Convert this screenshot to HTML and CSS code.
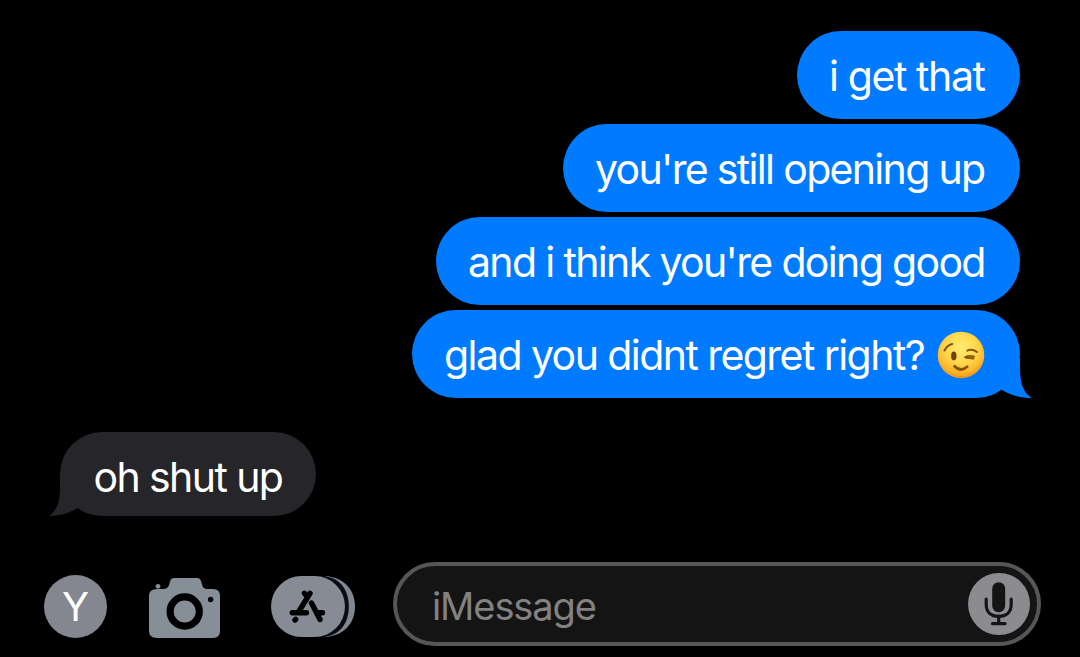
FILE: index.html
```html
<!DOCTYPE html>
<html lang="en">
<head>
<meta charset="utf-8">
<title>Messages</title>
<link rel="stylesheet" href="styles.css">
</head>
<body>
<main class="thread">
  <div class="bubble sent get"><span>i get that</span></div>
  <div class="bubble sent opening"><span>you're still opening up</span></div>
  <div class="bubble sent doing"><span>and i think you're doing good</span></div>
  <div class="bubble sent glad">
    <span>glad you didnt regret right?</span>
    <svg class="emoji" width="48" height="48" viewBox="0 0 48 48" role="img" aria-label="winking face">
      <defs>
        <radialGradient id="face" cx=".5" cy=".34" r=".66">
          <stop offset="0" stop-color="#ffec72"/>
          <stop offset=".5" stop-color="#ffd84b"/>
          <stop offset=".82" stop-color="#fdb52a"/>
          <stop offset="1" stop-color="#ed9219"/>
        </radialGradient>
      </defs>
      <circle cx="24" cy="24" r="23.3" fill="url(#face)"/>
      <ellipse cx="16.8" cy="25" rx="2.7" ry="4.4" fill="#70420a"/>
      <g fill="none" stroke="#87520c" stroke-width="2.1" stroke-linecap="round">
        <path d="M7.5 19.5Q10 14.2 15.2 13"/>
        <path d="M30.3 19.6Q35 17.5 40 21"/>
        <path d="M28 26.2Q32 23.9 37 25.6M28.5 26.6L36.5 27.5" stroke-width="1.8"/>
        <path d="M17.5 35.2Q24 41.7 30.2 35.6" stroke-width="2.7"/>
      </g>
    </svg>
    <svg class="tail" width="44" height="40" viewBox="0 0 44 40" aria-hidden="true"><path d="M32 0V10C32 25 35 34 43.5 40C33 40 22 37 14 32L0 20V0Z" fill="#007aff"/></svg>
  </div>
  <div class="bubble received">
    <span>oh shut up</span>
    <svg class="tail" width="44" height="40" viewBox="0 0 44 40" aria-hidden="true"><path d="M11 0V10C11 25 9 33 0 40C10 40 21 37 29 32L44 20V0Z" fill="#26252a"/></svg>
  </div>
</main>
<footer class="composer">
  <div class="avatar"><span>Y</span></div>
  <svg class="camera" width="72" height="62" viewBox="0 0 72 62" aria-label="Camera">
    <path d="M8 12H14Q19 12 20 8L21.5 3Q22.5 1 25 1H48Q51 1 52 4L53.5 9Q54.5 12 58 12H64Q71 12 71 19V54Q71 61 64 61H8Q0 61 0 54V19Q0 12 8 12Z" fill="#868e98"/>
    <circle cx="9" cy="9.3" r="2.4" fill="#868e98"/>
    <circle cx="35.7" cy="34.5" r="14.6" fill="#868e98" stroke="#000" stroke-width="7.2"/>
    <circle cx="61.6" cy="22.5" r="2.7" fill="#000"/>
  </svg>
  <svg class="apps" width="86" height="63" viewBox="0 0 86 63" aria-label="Apps">
    <path d="M54 1C72 2 84 14 84 31.5S72 61 54 62Z" fill="#7f8791"/>
    <path d="M46 1H52C68 2 77.8 14 77.8 31.5S68 61 52 62H46Z" fill="#090c12"/>
    <rect x="0" y="1" width="74" height="61" rx="30.5" fill="#868b95"/>
    <g fill="none" stroke="#000" stroke-width="5.4" stroke-linecap="round">
      <path d="M39 18.3L27.5 37M33.5 18.3L36.5 22.5M40.5 28L49 44.5M21.3 37.7H35.5M46 37.7H51.5"/>
      <path d="M24.7 44.3L24 45"/>
    </g>
  </svg>
  <div class="field">
    <span class="placeholder">iMessage</span>
    <svg class="mic" width="62" height="62" viewBox="0 0 62 62" aria-label="Dictate">
      <circle cx="31" cy="31" r="31" fill="#8c8b90"/>
      <rect x="24.2" y="9.2" width="13" height="30" rx="6.5" fill="#141414"/>
      <g fill="none" stroke="#141414" stroke-width="3.2" stroke-linecap="round">
        <path d="M18.2 26V31.5C18.2 39 23 43.3 30.7 43.3S43.2 39 43.2 31.5V26"/>
        <path d="M30.7 43V50M24.5 50.7H37" />
      </g>
    </svg>
  </div>
</footer>
</body>
</html>
```
FILE: styles.css
```css
* { box-sizing: border-box; }
body {
  width: 1080px;
  height: 657px;
  margin: 0;
  overflow: hidden;
  background: #000;
  color: #fff;
  font-family: Inter, "Liberation Sans", sans-serif;
}
.thread {
  display: flex;
  flex-direction: column;
  gap: 5px;
  height: 516px;
  padding: 30.5px 60px 0;
}
.bubble {
  position: relative;
  display: flex;
  align-items: center;
  flex: none;
  height: 88px;
  padding-left: 32px;
  border-radius: 44px;
  font-size: 41px;
  line-height: 50px;
  white-space: nowrap;
}
.bubble > span { padding-top: 3px; }
.sent { align-self: flex-end; background: #007aff; }
.get { width: 223px; letter-spacing: -1.4px; }
.opening { width: 457px; letter-spacing: -1.67px; }
.doing { width: 584px; letter-spacing: -1.65px; }
.glad { width: 608px; letter-spacing: -1.56px; }
.emoji { position: absolute; left: 525px; top: 21px; }
.tail { position: absolute; bottom: 0; }
.glad .tail { right: -12px; }
.received {
  align-self: flex-start;
  width: 256px;
  height: 84px;
  margin-top: 29px;
  padding-left: 33.5px;
  background: #26252a;
  letter-spacing: -1.6px;
}
.received > span { padding-top: 6px; }
.received .tail { left: -11px; }
.composer {
  display: flex;
  align-items: center;
  height: 141px;
  padding: 38px 39px 0 44px;
}
.avatar {
  display: grid;
  place-items: center;
  width: 63px;
  height: 63px;
  margin-top: 2px;
  border-radius: 50%;
  background: #858790;
  font-size: 40px;
  line-height: 63px;
}
.camera { margin: 4px 0 0 42px; }
.apps { margin: 1px 0 0 50px; }
.field {
  display: flex;
  align-items: center;
  justify-content: space-between;
  width: 648px;
  height: 84px;
  margin: -4px 0 0 36px;
  padding: 0 7px 0 35px;
  border: 4px solid #565656;
  border-radius: 42px;
  background: #141414;
}
.placeholder {
  padding-top: 5px;
  color: #828282;
  font-size: 38px;
  letter-spacing: -1.1px;
}
```
